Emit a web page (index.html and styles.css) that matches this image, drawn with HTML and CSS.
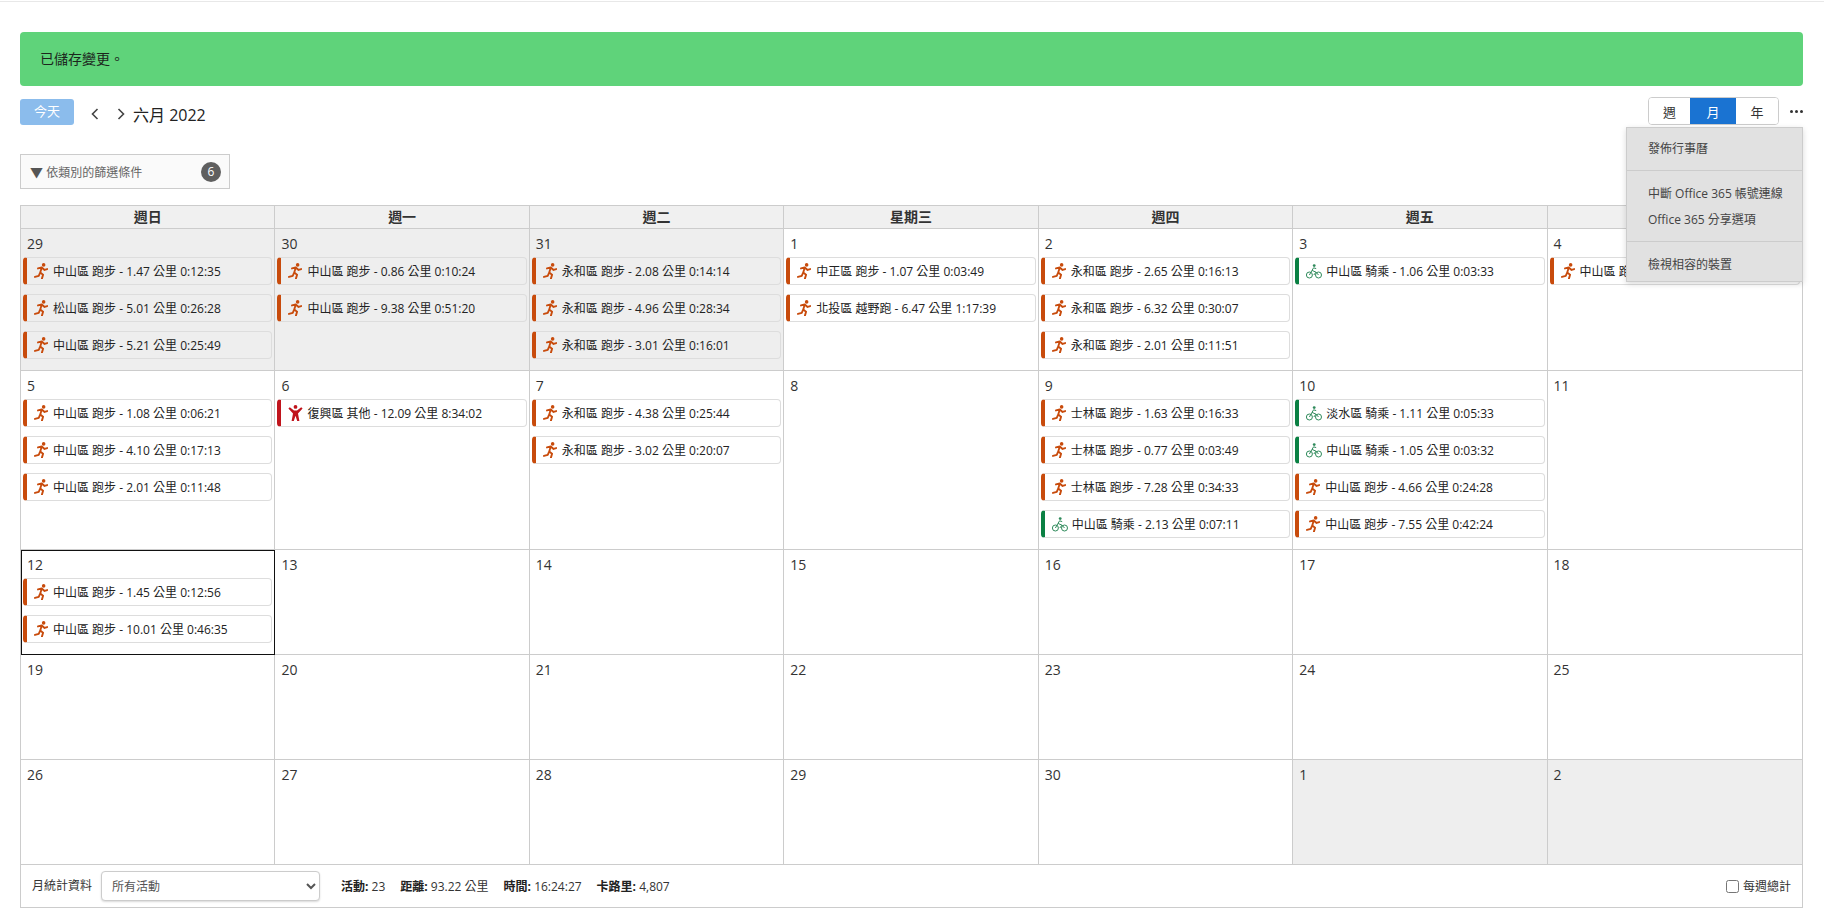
FILE: index.html
```html
<!DOCTYPE html>
<html lang="zh-Hant">
<head>
	<meta charset="utf-8">
	<title>行事曆</title>
	<link rel="stylesheet" href="styles.css">
</head>
<body>
	<svg class="defs" width="0" height="0">
		<symbol id="run" viewBox="0 0 14 17">
			<circle cx="9.8" cy="2" r="1.9" fill="currentColor"/>
			<path d="M3.8 5.8 L7.8 4.8 L10.8 7.4 L13.6 6.4 M7.8 4.8 L6.2 10.2 L9.2 12.4 L8 16.6 M6 10.4 L4.6 13.6 L0.6 14.8" fill="none" stroke="currentColor" stroke-width="2" stroke-linejoin="round" stroke-linecap="round"/>
		</symbol>
		<symbol id="bike" viewBox="0 0 16 15">
			<g fill="none" stroke="currentColor" stroke-width="1">
				<circle cx="3.4" cy="11" r="3"/>
				<circle cx="12.5" cy="11" r="3"/>
				<path d="M3.4 11 L6 6.4 L10 8.2 L7.8 11 M6 6.4 L7.6 3.8 L10.2 4.6 M10 8.2 L12.5 11"/>
			</g>
			<circle cx="8.2" cy="1.6" r="1.4" fill="currentColor"/>
		</symbol>
		<symbol id="other" viewBox="0 0 15 16">
			<circle cx="7.5" cy="1.9" r="1.9" fill="currentColor"/>
			<path d="M0.4 3.6 L1.8 2.2 L6 5.6 H9 L13.2 2.2 L14.6 3.6 L10 8.4 L11.4 16 H9.2 L7.5 10.8 L5.8 16 H3.6 L5 8.4 Z" fill="currentColor"/>
		</symbol>
		<symbol id="chev-left" viewBox="0 0 8 12">
			<path d="M6.5 1 L1.5 6 L6.5 11" fill="none" stroke="currentColor" stroke-width="1.6"/>
		</symbol>
		<symbol id="chev-right" viewBox="0 0 8 12">
			<path d="M1.5 1 L6.5 6 L1.5 11" fill="none" stroke="currentColor" stroke-width="1.6"/>
		</symbol>
	</svg>

	<div class="page">
		<div class="notice">已儲存變更<span class="notice-end">。</span></div>

		<div class="toolbar">
			<button class="today">今天</button>
			<button class="nav"><svg class="chev"><use href="#chev-left"/></svg></button>
			<button class="nav"><svg class="chev"><use href="#chev-right"/></svg></button>
			<span class="month-title">六月 2022</span>
			<div class="views">
				<button class="view">週</button>
				<button class="view active">月</button>
				<button class="view last">年</button>
			</div>
			<div class="dots"><span class="dot"></span><span class="dot"></span><span class="dot"></span></div>
			<div class="menu">
				<div class="menu-group"><div class="menu-item">發佈行事曆</div></div>
				<div class="menu-group">
					<div class="menu-item">中斷 Office 365 帳號連線</div>
					<div class="menu-item">Office 365 分享選項</div>
				</div>
				<div class="menu-group"><div class="menu-item">檢視相容的裝置</div></div>
			</div>
		</div>

		<div class="filter">
			<span class="filter-label"><span class="tri">▼</span> 依類別的篩選條件</span>
			<span class="badge">6</span>
		</div>

		<div class="calendar">
			<div class="weekdays">
				<div class="weekday">週日</div>
				<div class="weekday">週一</div>
				<div class="weekday">週二</div>
				<div class="weekday">星期三</div>
				<div class="weekday">週四</div>
				<div class="weekday">週五</div>
				<div class="weekday" aria-label="週六"></div>	<!-- covered by the open menu -->
			</div>

			<div class="days">
				<div class="day off"><div class="num">29</div>
					<div class="event run"><svg class="ico"><use href="#run"/></svg>中山區 跑步 - 1.47 公里 0:12:35</div>
					<div class="event run"><svg class="ico"><use href="#run"/></svg>松山區 跑步 - 5.01 公里 0:26:28</div>
					<div class="event run"><svg class="ico"><use href="#run"/></svg>中山區 跑步 - 5.21 公里 0:25:49</div>
				</div>
				<div class="day off"><div class="num">30</div>
					<div class="event run"><svg class="ico"><use href="#run"/></svg>中山區 跑步 - 0.86 公里 0:10:24</div>
					<div class="event run"><svg class="ico"><use href="#run"/></svg>中山區 跑步 - 9.38 公里 0:51:20</div>
				</div>
				<div class="day off"><div class="num">31</div>
					<div class="event run"><svg class="ico"><use href="#run"/></svg>永和區 跑步 - 2.08 公里 0:14:14</div>
					<div class="event run"><svg class="ico"><use href="#run"/></svg>永和區 跑步 - 4.96 公里 0:28:34</div>
					<div class="event run"><svg class="ico"><use href="#run"/></svg>永和區 跑步 - 3.01 公里 0:16:01</div>
				</div>
				<div class="day"><div class="num">1</div>
					<div class="event run"><svg class="ico"><use href="#run"/></svg>中正區 跑步 - 1.07 公里 0:03:49</div>
					<div class="event run"><svg class="ico"><use href="#run"/></svg>北投區 越野跑 - 6.47 公里 1:17:39</div>
				</div>
				<div class="day"><div class="num">2</div>
					<div class="event run"><svg class="ico"><use href="#run"/></svg>永和區 跑步 - 2.65 公里 0:16:13</div>
					<div class="event run"><svg class="ico"><use href="#run"/></svg>永和區 跑步 - 6.32 公里 0:30:07</div>
					<div class="event run"><svg class="ico"><use href="#run"/></svg>永和區 跑步 - 2.01 公里 0:11:51</div>
				</div>
				<div class="day"><div class="num">3</div>
					<div class="event bike"><svg class="ico"><use href="#bike"/></svg>中山區 騎乘 - 1.06 公里 0:03:33</div>
				</div>
				<div class="day"><div class="num">4</div>
					<div class="event run"><svg class="ico"><use href="#run"/></svg>中山區 跑步</div>
				</div>

				<div class="day"><div class="num">5</div>
					<div class="event run"><svg class="ico"><use href="#run"/></svg>中山區 跑步 - 1.08 公里 0:06:21</div>
					<div class="event run"><svg class="ico"><use href="#run"/></svg>中山區 跑步 - 4.10 公里 0:17:13</div>
					<div class="event run"><svg class="ico"><use href="#run"/></svg>中山區 跑步 - 2.01 公里 0:11:48</div>
				</div>
				<div class="day"><div class="num">6</div>
					<div class="event other"><svg class="ico"><use href="#other"/></svg>復興區 其他 - 12.09 公里 8:34:02</div>
				</div>
				<div class="day"><div class="num">7</div>
					<div class="event run"><svg class="ico"><use href="#run"/></svg>永和區 跑步 - 4.38 公里 0:25:44</div>
					<div class="event run"><svg class="ico"><use href="#run"/></svg>永和區 跑步 - 3.02 公里 0:20:07</div>
				</div>
				<div class="day"><div class="num">8</div></div>
				<div class="day"><div class="num">9</div>
					<div class="event run"><svg class="ico"><use href="#run"/></svg>士林區 跑步 - 1.63 公里 0:16:33</div>
					<div class="event run"><svg class="ico"><use href="#run"/></svg>士林區 跑步 - 0.77 公里 0:03:49</div>
					<div class="event run"><svg class="ico"><use href="#run"/></svg>士林區 跑步 - 7.28 公里 0:34:33</div>
					<div class="event bike"><svg class="ico"><use href="#bike"/></svg>中山區 騎乘 - 2.13 公里 0:07:11</div>
				</div>
				<div class="day"><div class="num">10</div>
					<div class="event bike"><svg class="ico"><use href="#bike"/></svg>淡水區 騎乘 - 1.11 公里 0:05:33</div>
					<div class="event bike"><svg class="ico"><use href="#bike"/></svg>中山區 騎乘 - 1.05 公里 0:03:32</div>
					<div class="event run"><svg class="ico"><use href="#run"/></svg>中山區 跑步 - 4.66 公里 0:24:28</div>
					<div class="event run"><svg class="ico"><use href="#run"/></svg>中山區 跑步 - 7.55 公里 0:42:24</div>
				</div>
				<div class="day"><div class="num">11</div></div>

				<div class="day current"><div class="num">12</div>
					<div class="event run"><svg class="ico"><use href="#run"/></svg>中山區 跑步 - 1.45 公里 0:12:56</div>
					<div class="event run"><svg class="ico"><use href="#run"/></svg>中山區 跑步 - 10.01 公里 0:46:35</div>
				</div>
				<div class="day"><div class="num">13</div></div>
				<div class="day"><div class="num">14</div></div>
				<div class="day"><div class="num">15</div></div>
				<div class="day"><div class="num">16</div></div>
				<div class="day"><div class="num">17</div></div>
				<div class="day"><div class="num">18</div></div>

				<div class="day"><div class="num">19</div></div>
				<div class="day"><div class="num">20</div></div>
				<div class="day"><div class="num">21</div></div>
				<div class="day"><div class="num">22</div></div>
				<div class="day"><div class="num">23</div></div>
				<div class="day"><div class="num">24</div></div>
				<div class="day"><div class="num">25</div></div>

				<div class="day"><div class="num">26</div></div>
				<div class="day"><div class="num">27</div></div>
				<div class="day"><div class="num">28</div></div>
				<div class="day"><div class="num">29</div></div>
				<div class="day"><div class="num">30</div></div>
				<div class="day off"><div class="num">1</div></div>
				<div class="day off"><div class="num">2</div></div>
			</div>

			<div class="stats">
				<span class="stats-title">月統計資料</span>
				<select class="stats-select"><option>所有活動</option></select>
				<span class="stat"><b>活動:</b> 23</span>
				<span class="stat"><b>距離:</b> 93.22 公里</span>
				<span class="stat"><b>時間:</b> 16:24:27</span>
				<span class="stat"><b>卡路里:</b> 4,807</span>
				<label class="weekly"><input type="checkbox" class="weekly-box"> 每週總計</label>
			</div>
		</div>
	</div>
</body>
</html>
```

FILE: styles.css
```css
html, body { margin: 0; padding: 0; height: 908px; overflow: hidden; background: #fff; }
body { font-family: "Open Sans", "Noto Sans CJK TC", sans-serif; font-size: 12px; color: #333; }
.defs { position: absolute; }
button { font-family: inherit; }

.page { border-top: 1px solid #e8e8e8; margin-top: 1px; padding: 30px 21px 0 20px; }

.notice { height: 54px; line-height: 52px; padding-left: 20px; border-radius: 4px; background: #5fd37a; color: #1c261d; font-size: 14px; }
.notice-end { font-family: "Noto Sans CJK JP", sans-serif; }

.toolbar { position: relative; display: flex; align-items: center; height: 28px; margin-top: 11px; }
.today { width: 54px; height: 26px; margin-top: 2px; margin-right: 8px; padding: 0 0 3px; border: 0; border-radius: 3px; background: #8bbcec; color: #fff; font-size: 13px; }
.nav { display: flex; align-items: center; justify-content: center; width: 26px; height: 26px; margin-top: 6px; padding: 0; border: 0; background: none; color: #444; }
.chev { width: 8px; height: 12px; }
.month-title { margin-left: -1px; margin-top: 6px; font-size: 16px; color: #222; }

.views { display: flex; height: 28px; margin-left: auto; border: 1px solid #ccc; border-radius: 4px; overflow: hidden; box-sizing: border-box; }
.view { width: 41px; padding: 0; border: 0; background: #fff; color: #333; font-size: 13px; }
.view.active { width: 46px; background: #1a73d2; color: #fff; }
.view.last { width: 42px; }
.dots { display: flex; justify-content: flex-end; gap: 2px; width: 24px; }
.dot { width: 3px; height: 3px; border-radius: 50%; background: #333; }

.menu { position: absolute; top: 30px; right: 0; z-index: 5; width: 175px; border: 1px solid #ccc; background: #e1e1e1; box-shadow: 0 2px 6px rgba(0, 0, 0, .15); color: #444; }
.menu-group { padding: 8px 0 10px; border-bottom: 1px solid #ccc; }
.menu-group:first-child { padding-top: 6px; }
.menu-group:last-child { padding-bottom: 5px; border-bottom: 0; }
.menu-item { height: 26px; line-height: 30px; padding-left: 21px; white-space: nowrap; }

.filter { display: flex; align-items: center; justify-content: space-between; box-sizing: border-box; width: 210px; height: 35px; margin-top: 29px; padding: 0 8px 0 9px; border: 1px solid #ccc; background: #fafafa; color: #666; }
.tri { font-size: 13px; color: #555; }
.badge { width: 20px; height: 20px; line-height: 20px; border-radius: 50%; background: #5f5f5f; color: #fff; text-align: center; }

.calendar { margin-top: 16px; border-left: 1px solid #ccc; border-right: 1px solid #ccc; }
.weekdays { display: grid; grid-template-columns: repeat(7, 1fr); border-top: 1px solid #ccc; }
.weekday { height: 22px; line-height: 21px; border-right: 1px solid #ccc; border-bottom: 1px solid #ccc; background: #f0f0f0; text-align: center; font-size: 14px; font-weight: 700; color: #333; }
.weekday:last-child { border-right: 0; }

.days { display: grid; grid-template-columns: repeat(7, 1fr); }
.day { box-sizing: border-box; min-height: 105px; padding: 3px 2px 2px 2px; border-right: 1px solid #ccc; border-bottom: 1px solid #ccc; }
.day:nth-child(7n) { border-right: 0; }
.day.off { background: #eee; }
.day.current { outline: 1.5px solid #111; outline-offset: -1px; }
.num { height: 25px; padding-left: 4px; line-height: 23px; font-size: 14px; color: #333; }

.event { display: flex; align-items: center; box-sizing: border-box; height: 28px; margin-bottom: 9px; padding-left: 7px; border: 1px solid #ddd; border-left: 4px solid; border-radius: 4px; font-size: 12px; color: #222; white-space: nowrap; overflow: hidden; }
.event.run { border-left-color: #c84b0c; }
.event.bike { border-left-color: #0a8043; }
.event.other { border-left-color: #c0141c; }
.ico { flex: none; width: 14px; height: 16px; margin-right: 5px; }
.run .ico { color: #c84b0c; }
.bike .ico { width: 16px; height: 15px; margin-right: 4px; color: #2f8a5b; }
.other .ico { width: 15px; height: 16px; margin-right: 4px; color: #c0141c; }

.stats { display: flex; align-items: center; height: 42px; padding-left: 11px; border-bottom: 1px solid #ccc; }
.stats-title { margin-right: 9px; margin-top: -2px; }
.stats-select { width: 219px; height: 30px; margin-right: 21px; padding-left: 6px; border: 1px solid #ccc; border-radius: 4px; background: #fff; box-shadow: 0 1px 2px rgba(0, 0, 0, .15); font-family: inherit; font-size: 12px; color: #555; }
.stat { margin-right: 15px; }
.stat b { color: #222; }
.weekly { display: flex; align-items: center; margin-left: auto; margin-right: 11px; }
.weekly-box { width: 13px; height: 13px; margin: 0 4px 0 0; }
```
